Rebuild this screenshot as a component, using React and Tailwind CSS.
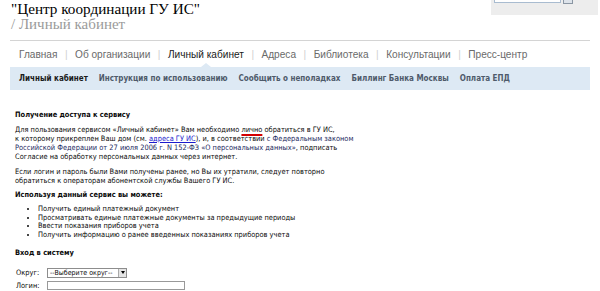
export default function App() {
  const nav = [
    { label: "Главная" },
    { label: "Об организации" },
    { label: "Личный кабинет", active: true },
    { label: "Адреса" },
    { label: "Библиотека" },
    { label: "Консультации" },
    { label: "Пресс-центр" },
  ];

  const subnav = [
    { label: "Личный кабинет", active: true },
    { label: "Инструкция по использованию" },
    { label: "Сообщить о неполадках" },
    { label: "Биллинг Банка Москвы" },
    { label: "Оплата ЕПД" },
  ];

  const features = [
    "Получить единый платежный документ",
    "Просматривать единые платежные документы за предыдущие периоды",
    "Ввести показания приборов учета",
    "Получить информацию о ранее введенных показаниях приборов учета",
  ];

  return (
    <div className="w-[600px] h-[291px] bg-white overflow-hidden text-[#222]">
      {/* Header */}
      <div className="flex justify-between">
        <div className="pl-[11px] pt-[1px] font-['Liberation_Serif',serif]">
          <div className="text-[15.2px] leading-[16px] text-black">"Центр координации ГУ ИС"</div>
          <div className="text-[15px] leading-[15px] text-[#9a9a9a]">/ Личный кабинет</div>
        </div>
        <div className="w-[107px] h-[15px] mr-[2px] bg-[#ededed] flex items-start gap-[2px] pl-[3px]">
          <div className="w-[67px] h-[3px] bg-white border border-t-0 border-[#a9bcd0]" />
          <div className="w-[10px] h-[4px] bg-[#dde3ea] border border-t-0 border-[#8a96a3]" />
        </div>
      </div>

      {/* Top line */}
      <div className="mx-[10px] mt-[8px] h-px bg-[#d4d4d4]" />

      {/* Main nav */}
      <div className="flex items-center pl-[19px] h-[26px] pt-[1px] font-['Liberation_Sans',Arial,sans-serif] text-[10.1px]">
        {nav.map((n, i) => (
          <div key={n.label} className="flex items-center">
            {i > 0 && <span className="mx-[7.5px] text-[#cfcfcf]">|</span>}
            <span className={n.active ? "text-[#1a1a1a]" : "text-[#6a6a6a]"}>{n.label}</span>
          </div>
        ))}
      </div>

      {/* Sub nav */}
      <div className="relative mx-[10px] h-[23px] bg-[#dde9f4] flex items-center gap-[11px] pl-[9px] font-['DejaVu_Sans_Condensed','DejaVu_Sans',sans-serif] font-bold text-[8px]">
        <div className="absolute -top-[4px] left-[191px] w-0 h-0 border-l-[5px] border-r-[5px] border-b-[4px] border-l-transparent border-r-transparent border-b-[#dde9f4]" />
        {subnav.map((s) => (
          <span key={s.label} className={s.active ? "text-[#1a1a1a]" : "text-[#4e5a6a]"}>
            {s.label}
          </span>
        ))}
      </div>

      {/* Content */}
      <div className="px-[15px] pt-[20px] font-['DejaVu_Sans_Condensed','DejaVu_Sans',sans-serif] text-[7.4px] leading-[9px] text-[#0a0a0a]">
        <div className="font-bold">Получение доступа к сервису</div>
        <p className="mt-[6px]">
          Для пользования сервисом «Личный кабинет» Вам необходимо{" "}
          <span className="underline decoration-[#d40000] decoration-[1.5px] underline-offset-[2px]">лично</span>{" "}
          обратиться в ГУ ИС,
          <br />к которому прикреплен Ваш дом (см.{" "}
          <span className="text-[#1a1acc] underline">адреса ГУ ИС</span>), и, в соответствии{" "}
          <span className="text-[#1c2a60]">
            с Федеральным законом
            <br />
            Российской Федерации от 27 июля 2006 г. N 152-ФЗ «О персональных данных»
          </span>
          , подписать
          <br />
          Согласие на обработку персональных данных через интернет.
        </p>
        <p className="mt-[6px]">
          Если логин и пароль были Вами получены ранее, но Вы их утратили, следует повторно
          <br />
          обратиться к операторам абонентской службы Вашего ГУ ИС.
        </p>
        <div className="font-bold mt-[5px]">Используя данный сервис вы можете:</div>
        <ul className="mt-[6px] pl-[23px] list-disc">
          {features.map((f) => (
            <li key={f} className="leading-[8.7px]">{f}</li>
          ))}
        </ul>
        <div className="font-bold mt-[8px]">Вход в систему</div>
        <div className="mt-[11px] flex items-center">
          <span className="w-[32px] pl-[1px]">Округ:</span>
          <div className="w-[80px] h-[10px] border border-[#8d8d8d] flex items-center justify-between pl-[2px] bg-white">
            <span className="text-[7px] leading-[8px]">--Выберите округ--</span>
            <div className="w-[8px] h-[8px] bg-[#e4e4e4] border-l border-[#aaa] flex items-center justify-center">
              <div className="w-0 h-0 border-l-[2px] border-r-[2px] border-t-[3px] border-l-transparent border-r-transparent border-t-black" />
            </div>
          </div>
        </div>
        <div className="mt-[3px] flex items-center">
          <span className="w-[32px] pl-[1px]">Логин:</span>
          <div className="w-[138px] h-[9px] border border-[#999] bg-white" />
        </div>
      </div>
    </div>
  );
}
